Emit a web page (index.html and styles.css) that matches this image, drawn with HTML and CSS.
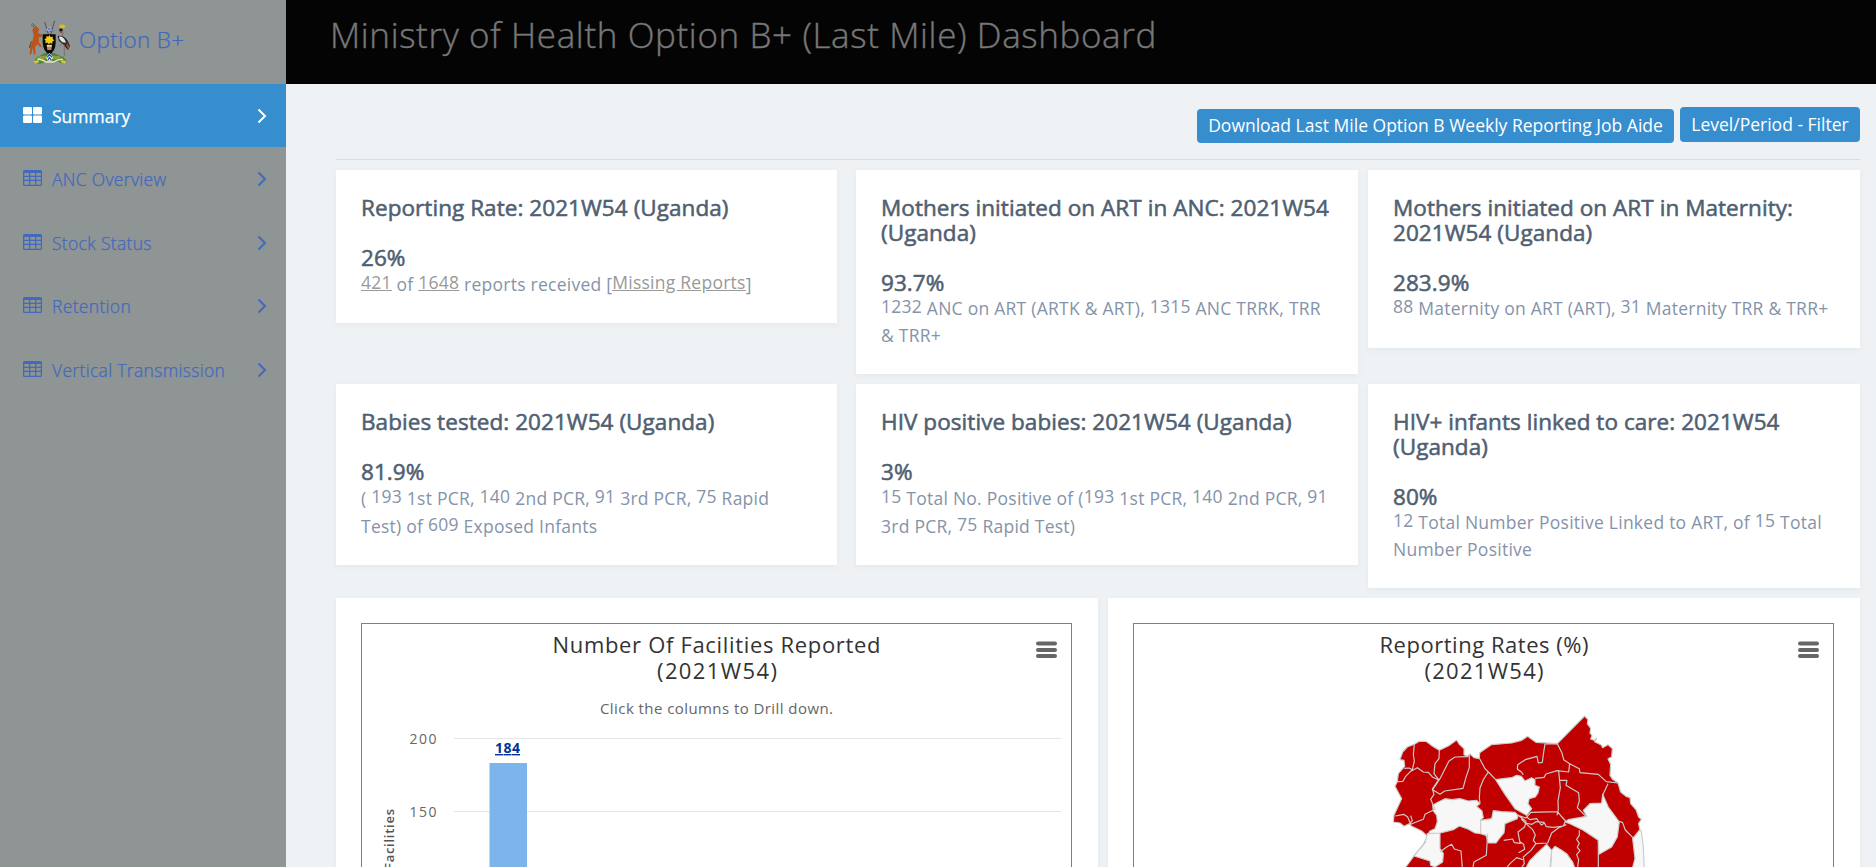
FILE: index.html
```html
<!DOCTYPE html>
<html lang="en">
<head>
<meta charset="utf-8">
<title>Option B+ Dashboard</title>
<link rel="stylesheet" href="styles.css">
</head>
<body>
<svg class="defs" width="0" height="0">
  <symbol id="table" viewBox="0 0 19 16"><path fill-rule="evenodd" d="M1.5 0h16A1.5 1.5 0 0 1 19 1.500v13a1.500 1.500 0 0 1-1.500 1.500h-16A1.500 1.500 0 0 1 0 14.500v-13A1.500 1.500 0 0 1 1.500 0zM1.300 3v2.700H6V3zm6 0v2.700h4.700V3zm6 0v2.700h4.500V3zM1.300 7v2.700H6V7zm6 0v2.700h4.700V7zm6 0v2.700h4.500V7zM1.300 11v3.700H6V11zm6 0v3.700h4.700V11zm6 0v3.700h4.500V11z"/></symbol>
  <symbol id="large" viewBox="0 0 19 16"><rect width="9" height="7.400" rx="1.200"/><rect x="10" width="9" height="7.400" rx="1.200"/><rect y="8.500" width="9" height="7.500" rx="1.200"/><rect x="10" y="8.500" width="9" height="7.500" rx="1.200"/></symbol>
  <symbol id="chev" viewBox="0 0 10 16"><path d="M1.500 1.500 8 8l-6.500 6.500" fill="none" stroke="currentColor" stroke-width="2"/></symbol>
</svg>
<div class="page">
  <aside class="sidebar">
    <a class="brand">
      <svg class="crest" width="42" height="44" viewBox="24 28 126 132">
        <path d="M74 34 94 100M104 30 84 100" stroke="#5a4038" stroke-width="2.500"/>
        <path d="M42 156q2-14 16-20l16-9h28l20 9q14 6 20 18-20 8-28-2H76q-10 12-34 4z" fill="#4c8a35"/>
        <path d="M58 136h60l8 10H52z" fill="#8a9b45"/>
        <path d="M40 152l14-4 4 6-12 5zM140 152l-14-4-4 6 12 5z" fill="#e0bd4f"/>
        <path d="M37 38q6 6 11 10M33 42q6 4 11 9" stroke="#4c3326" stroke-width="2" fill="none"/>
        <path d="M40 52l8-6 9 8-3 13 12 5v6l-10 2 1 16 8 10-4 4-9-9-7 8 2 22-5 2-4-22-4 19-5 2 2-24 6-14 4-22-4-14z" fill="#bd5318"/>
        <path d="M35 92q-6 10-6 20" stroke="#6b3521" stroke-width="3" fill="none"/>
        <path d="M75 63q0-9 13-13 13 4 13 13z" fill="#5269ad"/><path d="M77 62l5-7 5 7 5-7 6 7M82 54l6-4 6 4" stroke="#dfe4f1" stroke-width="2" fill="none"/>
        <path d="M68 71h39v25q-1 26-19 36-18-10-20-36z" fill="#0b0b0b"/>
        <path d="M88 73l4 6 7-1-1 7 5 4-6 4v6l-7-2-4 4-3-5-7 1 1-7-4-4 6-3v-7l6 2z" fill="#f2cd16"/>
        <path d="M80 102h16l-2 16h-12z" fill="#b68a5d"/><path d="M81 103h14v5H81z" fill="#f3d2a5"/>
        <path d="M79 140l9-14 11 14-5 10H83z" fill="#edf0ff"/><path d="M82 140l6-9 8 9M84 148l4-7 6 7" stroke="#2749a7" stroke-width="3.500" fill="none"/>
        <path d="M52 145q20 3 26 9h22q12-9 29-8" stroke="#ede5bd" stroke-width="4" fill="none"/>
        <path d="M118 45q7-7 19 1l-5 7-12 1z" fill="#dfbd21"/>
        <circle cx="123" cy="58" r="5.500" fill="#1c1719"/><path d="M121 62h5v5h-5z" fill="#cc2b22"/>
        <path d="M127 60q5 14-6 21" stroke="#747e85" stroke-width="5" fill="none"/>
        <path d="M113 76q17-3 29 13l8 17-6 12-15-18-12-9z" fill="#272629"/><path d="M118 77q15 1 20 19-13 1-20-12z" fill="#e5e2db"/><path d="M141 96l8 12-4 8-7-12z" fill="#a14b24"/>
        <path d="M133 101v34l-6 8M128 96l-9 11" stroke="#66645c" stroke-width="2" fill="none"/>
      </svg>
      <span>Option B+</span>
    </a>
    <nav>
      <a class="item active"><svg class="ic"><use href="#large"/></svg><span>Summary</span><svg class="ch"><use href="#chev"/></svg></a>
      <a class="item"><svg class="ic"><use href="#table"/></svg><span>ANC Overview</span><svg class="ch"><use href="#chev"/></svg></a>
      <a class="item"><svg class="ic"><use href="#table"/></svg><span>Stock Status</span><svg class="ch"><use href="#chev"/></svg></a>
      <a class="item"><svg class="ic"><use href="#table"/></svg><span>Retention</span><svg class="ch"><use href="#chev"/></svg></a>
      <a class="item"><svg class="ic"><use href="#table"/></svg><span>Vertical Transmission</span><svg class="ch"><use href="#chev"/></svg></a>
    </nav>
  </aside>
  <div class="main">
    <header class="top"><h1>Ministry of Health Option B+ (Last Mile) Dashboard</h1></header>
    <main class="content">
      <div class="actions"><a class="btn job">Download Last Mile Option B Weekly Reporting Job Aide</a><a class="btn filter">Level/Period - Filter</a></div>
      <section class="stats">
        <article class="card"><h4>Reporting Rate: 2021W54 (Uganda)</h4><h4 class="pct">26%</h4><p><a class="link">421</a> of <a class="link">1648</a> reports received [<a class="link">Missing Reports</a>]</p></article>
        <article class="card mid"><h4>Mothers initiated on ART in ANC: 2021W54 (Uganda)</h4><h4 class="pct">93.7%</h4><p><a>1232</a> ANC on ART (ARTK &amp; ART), <a>1315</a> ANC TRRK, TRR<br>&amp; TRR+</p></article>
        <article class="card"><h4>Mothers initiated on ART in Maternity: 2021W54 (Uganda)</h4><h4 class="pct">283.9%</h4><p><a>88</a> Maternity on ART (ART), <a>31</a> Maternity TRR &amp; TRR+</p></article>
        <article class="card"><h4>Babies tested: 2021W54 (Uganda)</h4><h4 class="pct">81.9%</h4><p>( <a>193</a> 1st PCR, <a>140</a> 2nd PCR, <a>91</a> 3rd PCR, <a>75</a> Rapid<br>Test) of <a>609</a> Exposed Infants</p></article>
        <article class="card mid"><h4>HIV positive babies: 2021W54 (Uganda)</h4><h4 class="pct">3%</h4><p><a>15</a> Total No. Positive of (<a>193</a> 1st PCR, <a>140</a> 2nd PCR, <a>91</a><br>3rd PCR, <a>75</a> Rapid Test)</p></article>
        <article class="card"><h4>HIV+ infants linked to care: 2021W54 (Uganda)</h4><h4 class="pct">80%</h4><p><a>12</a> Total Number Positive Linked to ART, of <a>15</a> Total<br>Number Positive</p></article>
      </section>
      <section class="charts">
        <article class="card"><div class="frame">
          <svg class="chart" width="709" height="480" viewBox="362 624 709 480">
            <g class="title"><text x="552.500" y="653" textLength="328">Number Of Facilities Reported</text><text x="657" y="679" textLength="120">(2021W54)</text></g>
            <text class="sub" x="600" y="714" textLength="233">Click the columns to Drill down.</text>
            <path d="M454 738.500h607M454 811.500h607" stroke="#e6e6e6"/>
            <text class="axis" x="409.500" y="744" textLength="27">200</text><text class="axis" x="409.500" y="817" textLength="27">150</text>
            <rect x="489.500" y="763" width="37.500" height="341" fill="#7cb5ec"/>
            <text class="label" x="495" y="753" textLength="25">184</text>
            <text class="ytitle" transform="translate(394 870) rotate(-90)" textLength="61">Facilities</text>
            <path class="burger" d="M1038 643.500h17M1038 650h17M1038 656h17"/>
          </svg></div></article>
        <article class="card"><div class="frame">
          <svg class="chart" width="699" height="480" viewBox="1134 624 699 480">
            <g class="title"><text x="1379.500" y="653" textLength="209">Reporting Rates (%)</text><text x="1424.500" y="679" textLength="119">(2021W54)</text></g>
            <path class="burger" d="M1800 643.500h17M1800 650h17M1800 656h17"/>
            <g transform="translate(1380 707) scale(.3333)" stroke="#ccc" stroke-width="3.500" stroke-linejoin="round">
              <path fill="#c00000" d="M103 112l15-9h20l20 15 20 12 27-13 25-18 8 13 14 13v18l10 5 8-7 12 11 16 3 1-18 35-24 61-5 30-8 18-12 12 9 13 9 64 4 82-83 10 11-2 12 10 14-2 14 6 8-4 10 10 4 8-6-6 10 20 10 4 8 16-9 13 12-2 25-11 5 8 17-2 33 8 12 16 11 8 27 16 13 12 4 2 18 16 18 8 22 8 7-8 13 4 20 9 60v60H70l32-43 28-35 13-24-18-16-30-14-7-8-16 8-12-10-20-3 2-20 10-22 13-28-20-37 7-14 3-24 13-15 6-7-2-18-12-2 8-23 14-15z"/>
              <path fill="#f7f7f7" d="M347 218l29-4 19-2 15-7 14 3 11 14 20-10 10 6v17l13 5-4 18-8 12-18 5-4 15 11 15-15 20-35-20-30-43zM158 295l17-10 20-10 20 3 25-3 25 7 25-2 10 10-10 8 16 14 4 20-8 6v42l-17-2-20-11-27-10-18 11-20 5-20 5-35 2 5-8 15-7 7-20-2-20-10-13zM340 311l25 3 40 2 9 9-2 10-37 15-3 28-12 14-12 16h-23l-7-23-16-5v-40l33-5zM668 262l17 38 33 45-6 45-17 30-38 22-2-42-45-30-40-20-15-5 10-7 55-10-10-18 20-20 35-2zM142 380l38-2v47l10 15-2 25-23 15-13-5-2-13-48-15 33-39zM437 485l13-25 20-20 30-28 15 18-5 55zM512 485l3-55 10-12 20 12 15 10 18 25 7 20zM778 370l6 2 6 48 3 65h-36l8-30-7-60 12-15z"/>
              <path fill="none" d="M103 112l-3 30 3 20-6 26-10-5-14 1M97 188l-20 20-8 15-17 1M90 194l22-12 18 13 15 1 12 14 18 8M178 130l-1 25-12 15-3 30 14 18-19 28 5 16-10 15 13 30-30 15-5 15-38 15-9-22-12-8-25 5M92 326l5 15-9 10M268 141v40l-10 30-9 33-55 8-14 10-22-14 22-33 27-53 18-12 40-1M299 155l16 30 10 10-15 23-10 25-2 30 2 15M325 195l22 23M532 110l-37 1-4 25-4 30-12 2-4-20-35 10-23 15-1 13 13 10 5 8M532 110l14 28 5 20 18 12-3 25-34-4-34 10-6 10-27 3M569 170l29 15 2 12 55 5 24 22 35 4M536 192l5 50-7 40 1 25-4 18M539 220h22l-3 15 20 12 18 10 2 25-6 20 26 26M684 230l-16 35M718 343l10 4 8 22 25 25M414 325l24 8 15-17 80-2 10 13 14 15-7 15-30 4-21-2-7-13-24-2-12 8-20-4-12-12M440 330l10 8 20-3 14 19 10-6M414 325l24 18-4 17-20 15 4 22 3 12-18-2-5-11-27 4M438 350l20 18 8 16-6 16 8 10 35-2 12-30 20-15 24-10M468 410l-15 20-23 20 3 20-10 15M421 405l10 7 3 15-18 10M598 370v15l-8 12 8 12-6 12 8 10-10 12 6 15-3 22M655 398v83M323 380l-4 65-37 20-4 20M180 435l20-15 15-8 8 14 20 6 4 50M378 485l12-15 20-18 24 8"/>
            </g>
          </svg></div></article>
      </section>
    </main>
  </div>
</div>
</body>
</html>
```
FILE: styles.css
```css
* { box-sizing: border-box; }
html, body { margin: 0; height: 100%; overflow: hidden; }
body { font-family: "Open Sans", "Noto Sans", sans-serif; font-size: 17.5px; background: #eef2f5; color: #8593a9; }
.defs { display: block; height: 0; }
.page { display: flex; height: 867px; overflow: hidden; }
.sidebar { flex: none; width: 286px; background: #8f9494; color: #4169bd; font-weight: 300; letter-spacing: .32px; -webkit-text-stroke: .25px currentColor; }
.brand { display: flex; height: 84px; padding: 20px 0 0 28px; font-size: 22.5px; line-height: 39px; gap: 9px; }
.item { display: flex; align-items: center; height: 63.800px; padding: 0 19px 0 23px; font-size: 17.5px; }
.item span { flex: 1; margin-left: 10px; }
.item .ic { width: 19px; height: 16px; fill: currentColor; margin-bottom: 2px; }
.item .ch { width: 10px; height: 16px; }
.item.active { height: 63px; background: #368ecf; color: #fff; font-weight: 400; letter-spacing: 0; }
.main { flex: 1; min-width: 0; }
.top { height: 84px; background: #040404; padding: 11px 0 0 44px; }
.top h1 { margin: 0; font-size: 35px; line-height: 48px; font-weight: 300; letter-spacing: .62px; color: #777; white-space: nowrap; -webkit-text-stroke: .4px #777; }
.content { padding: 23px 16px 0 50px; }
.actions { display: flex; justify-content: flex-end; gap: 6px; height: 53px; border-bottom: 1px solid #d8dde0; }
.btn { height: 35px; border-radius: 4px; background: #368ecf; color: #fff; font-size: 17.5px; line-height: 34px; text-align: center; white-space: nowrap; }
.job { width: 477px; height: 34px; margin-top: 2px; line-height: 33px; }
.filter { width: 180px; }
.stats { display: grid; grid-template-columns: 501px 511px 492px; column-gap: 10px; row-gap: 10px; align-items: start; padding-top: 10px; }
.card { background: #fff; padding: 25px; box-shadow: 0 2px 6px rgba(60, 80, 110, .06); }
.stats .card { padding: 26px 10px 26px 25px; }
.mid { margin-left: 9px; }
h4 { margin: 0; font-size: 22.5px; line-height: 24.750px; font-weight: 400; letter-spacing: .06px; color: #4f6072; -webkit-text-stroke: .55px #4f6072; }
.pct { margin-top: 25px; }
p { margin: -2px 0 0; line-height: 26.500px; letter-spacing: .25px; white-space: nowrap; }
p a { vertical-align: 1.800px; }
.link { color: #999; text-decoration: underline; }
.charts { display: grid; grid-template-columns: 762px 752px; gap: 10px; padding-top: 10px; }
.frame { border: 1px solid #808080; height: 482px; margin-right: 1px; }
.chart { display: block; max-width: 100%; font-family: "Open Sans", "Noto Sans", sans-serif; }
.title { font-size: 22px; fill: #333; }
.sub { font-size: 15px; fill: #666; }
.axis { font-size: 14px; fill: #666; }
.label { font-size: 14px; font-weight: 700; fill: #003399; text-decoration: underline; }
.ytitle { font-size: 13px; font-weight: 600; fill: #555; }
.burger { stroke: #666; stroke-width: 4; stroke-linecap: round; }
```
